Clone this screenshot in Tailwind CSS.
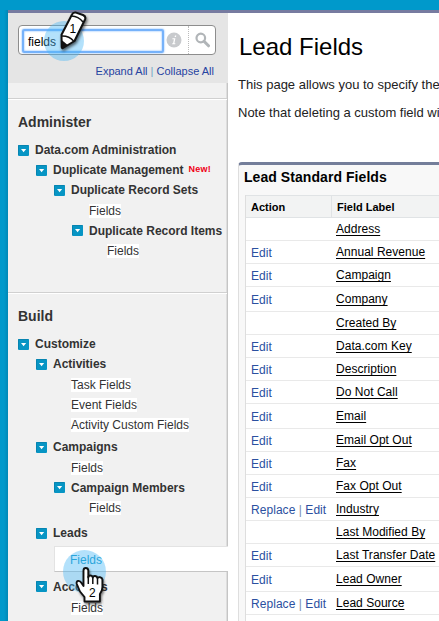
<!DOCTYPE html>
<html lang="en">
<head>
<meta charset="utf-8">
<title>Lead Fields</title>
<script src="https://cdn.jsdelivr.net/npm/@tailwindcss/browser@4"></script>
</head>
<body class="w-[439px] h-[621px] overflow-hidden bg-[#0099cb] font-['Liberation_Sans',Arial,sans-serif] text-[12px] text-[#333]">
<svg class="hidden"><symbol id="tw" viewBox="0 0 11 11"><rect width="11" height="11" rx="1" fill="#0795c4"/><path d="M.5 10V.5H10.500" fill="none" stroke="#0784b0"/><path d="M3 4h5.200L5.600 7.200z" fill="#fff"/></symbol></svg>
<div class="relative flex w-[439px] h-[621px] pl-2 pt-[10px] overflow-hidden">
  <div class="absolute left-0 top-[10px] w-2 h-[611px] bg-linear-to-r from-[#0099cb] from-50% to-[#0088b6]"></div>
  <div class="absolute left-2 top-[10px] w-[431px] h-[3px] bg-[#777ba0]"></div>
  <aside class="w-[220px] shrink-0 pt-[3px] bg-[#f1f1f1]">
    <div class="h-[70px] bg-[#e5e5e5] pl-[10px] pt-3">
      <div class="flex items-center w-[198px] h-[30px] bg-white border border-[#8d8d8d] rounded-[4px]">
        <div class="ml-[3px] mt-px w-[142px] h-[24px] border-2 border-[#76b2fa] rounded-[2px] shadow-[0_0_2px_#68aaff,inset_0_0_2px_#68aaff] pl-[4px] pt-[3px] flex items-center text-[12px] text-black">fields</div>
        <svg class="ml-[2px]" width="16" height="16" viewBox="0 0 16 16"><circle cx="8" cy="8" r="7.500" fill="#c8cacd"/><path d="M9 3.400h1.300l-.3 1.700H8.600zM6.500 6.200h2.900l-1 5h1l-.2 1H6.100l.2-1h.8l.8-4H6.300z" fill="#fff"/></svg>
        <div class="ml-[6px] h-[28px] border-l border-dotted border-[#bbb]"></div>
        <svg class="ml-[6px]" width="15" height="16" viewBox="0 0 15 16"><circle cx="5.800" cy="6" r="4.300" fill="none" stroke="#b1b5b8" stroke-width="2.200"/><path d="M9 9.300l4.500 4.500" stroke="#b1b5b8" stroke-width="3" stroke-linecap="round"/></svg>
      </div>
      <div class="mt-[8px] h-[16px] leading-[16px] w-[196px] text-right text-[11px] text-[#2643a1] whitespace-nowrap">Expand All <span class="text-[#72a4c4]">|</span> Collapse All</div>
    </div>
    <div class="border-r border-[#c5c5c5] shadow-[inset_-1px_0_0_#dedede]">
      <div class="h-[15px]"></div>
      <div class="h-[2px] border-t border-[#d0d0d0] bg-white"></div>
      <h2 class="pl-[10px] pt-[12px] h-[40px] leading-[20px] text-[14px] font-bold">Administer</h2>
      <div class="h-[20px] pl-[10px] flex items-center font-bold tracking-[-.01px]"><svg class="w-[11px] h-[11px] mr-[6px]"><use href="#tw"/></svg>Data.com Administration</div>
      <div class="h-[20px] pl-[28px] flex items-center font-bold tracking-[-.01px]"><svg class="w-[11px] h-[11px] mr-[6px]"><use href="#tw"/></svg>Duplicate Management<span class="ml-[5px] text-[9px] text-[#f00016] tracking-[.25px]">New!</span></div>
      <div class="h-[20px] pl-[46px] flex items-center font-bold tracking-[-.01px]"><svg class="w-[11px] h-[11px] mr-[6px]"><use href="#tw"/></svg>Duplicate Record Sets</div>
      <div class="h-[21px] pl-[81px] flex items-center"><span class="bg-white leading-[14px]">Fields</span></div>
      <div class="h-[19px] pl-[64px] flex items-center font-bold tracking-[-.01px] whitespace-nowrap"><svg class="w-[11px] h-[11px] mr-[6px]"><use href="#tw"/></svg>Duplicate Record Items</div>
      <div class="h-[22px] pl-[99px] flex items-center"><span class="bg-white leading-[14px]">Fields</span></div>
      <div class="h-[30px]"></div>
      <div class="h-[2px] border-t border-[#d0d0d0] bg-white"></div>
      <h2 class="pl-[10px] pt-[12px] h-[40px] leading-[20px] text-[14px] font-bold">Build</h2>
      <div class="h-[20px] pl-[10px] flex items-center font-bold tracking-[-.01px]"><svg class="w-[11px] h-[11px] mr-[6px]"><use href="#tw"/></svg>Customize</div>
      <div class="h-[20px] pl-[28px] flex items-center font-bold tracking-[-.01px]"><svg class="w-[11px] h-[11px] mr-[6px]"><use href="#tw"/></svg>Activities</div>
      <div class="mt-px h-[20px] pl-[63px] flex items-center"><span class="bg-white leading-[14px]">Task Fields</span></div>
      <div class="h-[20px] pl-[63px] flex items-center"><span class="bg-white leading-[14px]">Event Fields</span></div>
      <div class="h-[20px] pl-[63px] flex items-center"><span class="bg-white leading-[14px]">Activity Custom Fields</span></div>
      <div class="mt-[2px] h-[20px] pl-[28px] flex items-center font-bold tracking-[-.01px]"><svg class="w-[11px] h-[11px] mr-[6px]"><use href="#tw"/></svg>Campaigns</div>
      <div class="h-[21px] pl-[63px] flex items-center"><span class="bg-white leading-[14px]">Fields</span></div>
      <div class="h-[19px] pl-[46px] flex items-center font-bold tracking-[-.01px]"><svg class="w-[11px] h-[11px] mr-[6px]"><use href="#tw"/></svg>Campaign Members</div>
      <div class="h-[22px] pl-[81px] flex items-center"><span class="bg-white leading-[14px]">Fields</span></div>
      <div class="mt-[4px] h-[20px] pl-[28px] flex items-center font-bold tracking-[-.01px]"><svg class="w-[11px] h-[11px] mr-[6px]"><use href="#tw"/></svg>Leads</div>
      <div class="relative mt-[3px] ml-[46px] -mr-px h-[26px] bg-white border-t border-l border-b border-t-[#e3e3e3] border-l-[#e3e3e3] border-b-[#c5c5c5] pl-[15px] pt-px flex items-center text-[#0e98c8]">Fields</div>
      <div class="mt-[4px] h-[21px] pl-[28px] flex items-center font-bold tracking-[-.01px]"><svg class="w-[11px] h-[11px] mr-[6px]"><use href="#tw"/></svg>Accounts</div>
      <div class="h-[21px] pl-[63px] flex items-center"><span class="bg-white leading-[14px]">Fields</span></div>
      <div class="h-[20px]"></div>
    </div>
  </aside>
  <main class="flex-1 min-w-0 pt-[3px] pl-[10px] bg-white overflow-hidden text-black whitespace-nowrap">
    <h1 class="pt-[20px] pl-px h-[62px] leading-[28px] text-[24px]">Lead Fields</h1>
    <p class="h-[28px] leading-[20px] text-[13px] text-[#222]">This page allows you to specify the fields</p>
    <p class="h-[59px] leading-[20px] text-[13px] text-[#222]">Note that deleting a custom field will</p>
    <section class="w-[220px] border-t-[3px] border-t-[#747e9a] border-l border-l-[#dedede] rounded-tl-[4px] bg-[#f8f8f8] pl-[6px]">
      <h3 class="-ml-px h-[30px] leading-[24px] text-[14px] font-bold tracking-[.06px]">Lead Standard Fields</h3>
      <div id="rows" class="border-l border-[#dedede] bg-white">
        <div class="flex h-[23px] bg-[#f2f3f3] border-y border-[#e0e3e5] font-bold text-[11px] leading-[23px]"><div class="w-[86px] border-r border-[#e0e3e5] pl-[5px]">Action</div><div class="pl-[5px]">Field Label</div></div>
      </div>
    </section>
  </main>
  <svg class="absolute left-[40px] top-[8px]" width="52" height="58" viewBox="40 8 52 58">
    <circle cx="64" cy="41" r="20" fill="#49b8f5" fill-opacity=".42"/>
    <g style="filter:drop-shadow(1px 2px 1.500px rgba(0,0,0,.6))">
      <path d="M72 14.500q1.200-2.500 4-1.900l7 2.400q3.300 1.500 2 4.500L74.500 41l-11.500 7q-1.300.5-1.300-.9l-.2-12.300z" fill="#fff" stroke="#111" stroke-width="2" stroke-linejoin="round"/>
      <path d="M71.500 16q7 .3 11.500 6M61.800 36q7.500-.2 11.800 5" fill="none" stroke="#111" stroke-width="1.500"/>
      <path d="M61.700 40l6 5-4.700 3q-1.200.4-1.300-.9z" fill="#111"/>
    </g>
    <text x="69.500" y="33" font-size="12" fill="#000">1</text>
  </svg>
  <svg class="absolute left-[60px] top-[546px]" width="52" height="64" viewBox="60 546 52 64">
    <circle cx="84.500" cy="571.500" r="21.500" fill="#49b8f5" fill-opacity=".42"/>
    <path style="filter:drop-shadow(1px 2px 1px rgba(0,0,0,.5))" d="M83.500 570.500q0-2.500 2.300-2.500t2.500 2.500v7q0-2 2-2t2.500 2q.3-1.700 2.300-1.500t2.400 2.200q.4-1.400 2.500-1t2.400 2.300v7.500q0 4-2.500 7v7.500H84.500v-4.500L80 591.500l-3.200-7.500q-.8-2.500 1.200-3t3.500 2l2 3z" fill="#fff" stroke="#111" stroke-width="1.900" stroke-linejoin="round"/>
    <path d="M88.300 576v8M92.800 577.500v6.500M97.500 578.500v6" stroke="#111" stroke-width="1.500"/>
    <text x="88.900" y="596.500" font-size="12" fill="#000">2</text>
  </svg>
</div>
<script>
const data = [['','Address',23],['e','Annual Revenue',23],['e','Campaign',23],['e','Company',25],['','Created By',23],['e','Data.com Key',23],['e','Description',23],['e','Do Not Call',23],['e','Email',25],['e','Email Opt Out',23],['e','Fax',23],['e','Fax Opt Out',23],['r','Industry',23],['','Last Modified By',23],['e','Last Transfer Date',23],['e','Lead Owner',25],['r','Lead Source',23],['','',23]];
document.getElementById('rows').insertAdjacentHTML('beforeend', data.map(([a,label,h]) =>
  `<div class="flex items-center border-b border-[#e9e9e9]" style="height:${h}px"><div class="w-[90px] pl-[5px] pt-px text-[#2b50a0] tracking-[.05px]">${a==='r'?'Replace <span class="text-[#7890b0]">|</span> Edit':a?'Edit':''}</div><div class="leading-[14px] h-[15px] underline underline-offset-2 decoration-1 [text-decoration-skip-ink:none] tracking-[.03px]">${label}</div></div>`).join(''));
</script>
</body>
</html>
